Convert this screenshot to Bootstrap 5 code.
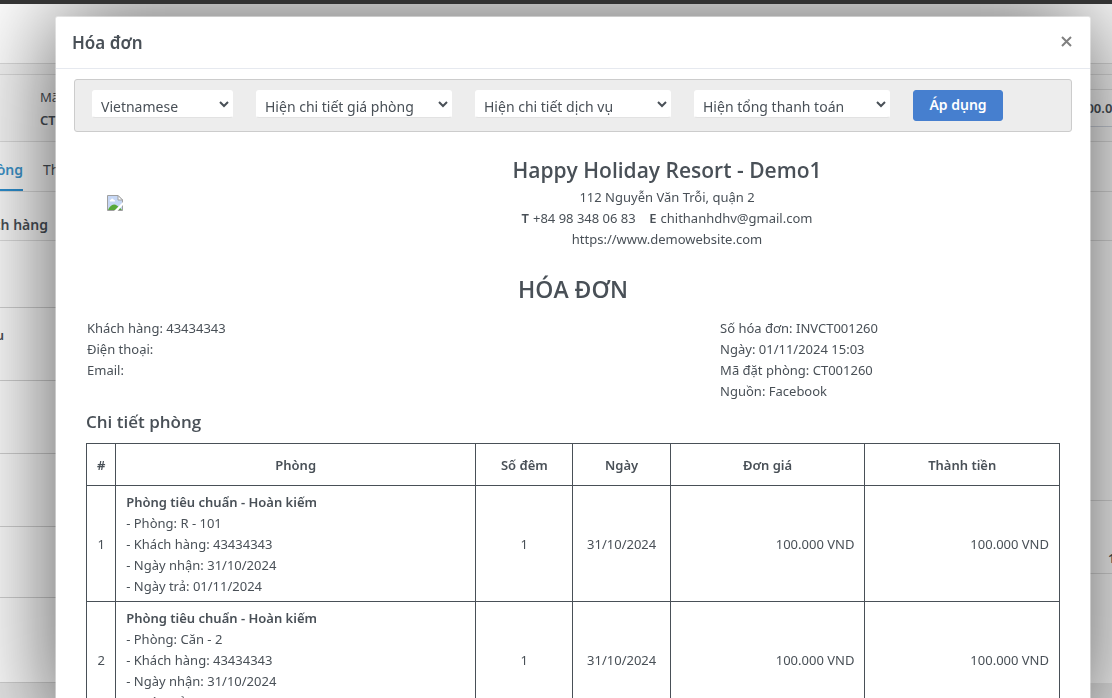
<!DOCTYPE html>
<html lang="vi">
<head>
<meta charset="utf-8">
<meta name="viewport" content="width=device-width, initial-scale=1">
<title>Hóa đơn</title>
<link href="https://cdn.jsdelivr.net/npm/bootstrap@5.3.0/dist/css/bootstrap.min.css" rel="stylesheet">
<style>
:root { --ink: #495057; --edge: #dcdcdc; }
html, body { height: 100%; overflow: hidden; }
body { font-family: "Noto Sans", "Open Sans", sans-serif; font-size: 13px; line-height: 21px; color: var(--ink); background: #fafafa; }
a { color: inherit; text-decoration: none; }

/* booking page behind the dialog */
.page-top { height: 4px; background: #333; z-index: 1060; }
.band { border-bottom: 1px solid var(--edge); }
.band-head { height: 60px; background: #fff; }
.band-gap { height: 11px; background: #f5f5f5; }
.band-summary { height: 67px; background: #f7f7f7; padding-left: 40px; }
.code-box { padding-top: 11px; line-height: 23px; }
.amount-box { width: 70px; height: 38px; margin-top: 14px; padding-top: 8px; padding-left: 36px; border: 1px solid var(--edge); border-right: 0; border-bottom-color: #cdd2dc; background: #f9f9f9; font-weight: 600; white-space: nowrap; }
.band-tabs { height: 50px; background: #fafafa; gap: 20px; }
.tab-item { width: 40px; padding-top: 17px; white-space: nowrap; font-size: 14px; }
.tab-on { width: 23px; color: #3c94ca; font-weight: 600; border-bottom: 2px solid #2d8fcf; justify-content: flex-end; }
.band-names { height: 48px; width: 48px; padding-top: 22px; justify-content: flex-end; white-space: nowrap; font-weight: 600; font-size: 14px; }
.list-left .band { height: 73px; border-color: #d0d0d0; }
.list-left .band:first-child { height: 67px; }
.list-left .band:nth-child(5) { height: 71px; }
.list-left .band:last-child { height: 85px; }
.list-right .band { height: 73px; }
.list-right .band:first-child { height: 260px; }
.sliver { width: 4px; justify-content: flex-end; padding-top: 17px; white-space: nowrap; }
.page-body { height: 442px; background: #fcfcfc; }
.page-foot { background: #e6e6e6; }

/* invoice dialog */
.modal { --bs-modal-width: 100%; overflow: hidden; }
.modal-dialog { max-width: none; margin: 16px 21px 0 55px; }
.modal-content { border: 1px solid rgba(255, 255, 255, .4); background-clip: padding-box; border-radius: 3px; box-shadow: 0 0 100px rgba(0, 0, 0, .68); color: var(--ink); }
.modal-header { height: 52px; padding: 0 16px; border-color: #e6e9ef; border-radius: 0; }
.modal-title { font-size: 17px; font-weight: 600; line-height: 24px; }
.close-x { border: 0; background: none; padding: 0 0 2px; width: 16px; height: 16px; display: flex; align-items: center; justify-content: center; }
.modal-body { padding: 10px 18px; }
.filters { height: 53px; padding: 10px 17px; gap: 23px; background: #ededed; border: 1px solid #ccc; border-radius: 3px; }
.filters select { appearance: auto; width: 196px; height: 28px; padding: 4px 0 0 4px; border: 1px solid #fff; border-bottom-color: #e2e2e2; border-radius: 3px; background: #fff; color: var(--ink); font-size: 14px; line-height: 21px; }
.filters .pick-lang { width: 141px; }
.btn-apply { --bs-btn-bg: #467fcf; --bs-btn-border-color: #467fcf; --bs-btn-hover-bg: #316cbe; --bs-btn-color: #fff; width: 90px; height: 31px; padding: 0 0 2px; border-radius: 3px; font-size: 14px; font-weight: 600; }
.invoice { padding: 24px 12px 0; }
.logo-cell { width: 188px; padding: 39px 21px 0; }
.resort { font-family: "Open Sans", sans-serif; font-size: 21px; font-weight: 600; line-height: 28px; margin: 0 0 3px; }
.doc-title { font-family: "Open Sans", sans-serif; font-size: 23px; font-weight: 600; line-height: 30px; margin: 24px 0 14px; }
.info-left { width: 65%; padding-left: 1px; }
.info-right { width: 35%; padding-left: 1px; }
.part-title { font-family: "Open Sans", sans-serif; font-size: 17px; font-weight: 600; line-height: 24px; margin: 8px 0 9px; }
.rooms { table-layout: fixed; width: 100%; margin: 0; }
.rooms th, .rooms td { border: 1px solid var(--ink); padding: 6px 10px 4px; vertical-align: middle; text-align: center; }
.rooms th { padding: 11px 4px 9px; font-weight: 600; }
.rooms td.room { text-align: left; white-space: nowrap; }
.rooms td.money { text-align: right; }
.rooms td.idx, .rooms td.day { padding-left: 0; padding-right: 0; }
b { font-weight: 600; }
</style>
</head>
<body>
<div class="page-top position-relative"></div>
<div class="band band-head"></div>
<div class="band band-gap"></div>
<div class="band band-summary d-flex justify-content-between">
  <div class="code-box">Mã đặt phòng<br><b>CT001260</b></div>
  <div class="amount-box">100.000</div>
</div>
<div class="band band-tabs d-flex">
  <a href="#" class="tab-item tab-on d-flex">Phòng</a>
  <a href="#" class="tab-item">Thanh toán</a>
</div>
<div class="band"><div class="band-names d-flex">Khách hàng</div></div>
<div class="page-body d-flex">
  <div class="list-left w-50">
    <div class="band"></div>
    <div class="band"><b class="sliver d-flex">Lưu</b></div>
    <div class="band"></div>
    <div class="band"></div>
    <div class="band"></div>
    <div class="band"></div>
  </div>
  <div class="list-right w-50">
    <div class="band"></div>
    <div class="band d-flex justify-content-end align-items-end pb-1"><b class="sliver d-flex justify-content-start">1</b></div>
  </div>
</div>
<div class="page-foot h-100"></div>

<div class="modal d-block" tabindex="-1" role="dialog" aria-labelledby="dialogTitle">
  <div class="modal-dialog">
    <div class="modal-content">
      <div class="modal-header">
        <h5 class="modal-title" id="dialogTitle">Hóa đơn</h5>
        <button type="button" class="close-x" aria-label="Đóng">
          <svg width="11" height="11" viewBox="0 0 11 11"><path d="M1 1 10 10M10 1 1 10" stroke="#808080" stroke-width="2" fill="none"/></svg>
        </button>
      </div>
      <div class="modal-body">
        <form class="filters d-flex align-items-start">
          <select class="pick-lang" aria-label="Ngôn ngữ"><option>Vietnamese</option></select>
          <select aria-label="Giá phòng"><option>Hiện chi tiết giá phòng</option></select>
          <select aria-label="Dịch vụ"><option>Hiện chi tiết dịch vụ</option></select>
          <select aria-label="Thanh toán"><option>Hiện tổng thanh toán</option></select>
          <button type="button" class="btn btn-apply">Áp dụng</button>
        </form>
        <div class="invoice">
          <div class="d-flex">
            <div class="logo-cell">
              <svg class="d-block" width="16" height="16" viewBox="0 0 16 16" role="img" aria-label="Logo">
                <path d="M.5.5H11L15.500 5V15.500H.5Z" fill="#c6d7f5" stroke="#a0a0a0"/>
                <path d="M11 .5V5H15.500Z" fill="#fff" stroke="#a0a0a0"/>
                <path d="M3 6.500Q2 5 4 4.500Q5 2.500 6.500 4.500Q8.500 5 8 6.500Z" fill="#fff"/>
                <path d="M1 15Q3 10 7 9.500Q10 9.500 15 15Z" fill="#58a83a"/>
                <path d="M7 16 16 7V10L10.500 16Z" fill="#fff"/>
              </svg>
            </div>
            <div class="flex-grow-1 text-center">
              <h2 class="resort">Happy Holiday Resort - Demo1</h2>
              <div>112 Nguyễn Văn Trỗi, quận 2</div>
              <div><b class="me-1">T</b>+84 98 348 06 83 &nbsp;&nbsp; <b class="me-1">E</b>chithanhdhv@gmail.com</div>
              <div>https://www.demowebsite.com</div>
            </div>
          </div>
          <h1 class="doc-title text-center">HÓA ĐƠN</h1>
          <div class="d-flex">
            <div class="info-left">
              <div>Khách hàng: 43434343</div>
              <div>Điện thoại:</div>
              <div>Email:</div>
            </div>
            <div class="info-right">
              <div>Số hóa đơn: INVCT001260</div>
              <div>Ngày: 01/11/2024 15:03</div>
              <div>Mã đặt phòng: CT001260</div>
              <div>Nguồn: Facebook</div>
            </div>
          </div>
          <h4 class="part-title">Chi tiết phòng</h4>
          <table class="rooms">
            <colgroup><col style="width:3%"><col style="width:37%"><col style="width:10%"><col style="width:10%"><col style="width:20%"><col style="width:20%"></colgroup>
            <thead>
              <tr><th>#</th><th>Phòng</th><th>Số đêm</th><th>Ngày</th><th>Đơn giá</th><th>Thành tiền</th></tr>
            </thead>
            <tbody>
              <tr>
                <td class="idx">1</td>
                <td class="room"><b>Phòng tiêu chuẩn - Hoàn kiếm</b><br>- Phòng: R - 101<br>- Khách hàng: 43434343<br>- Ngày nhận: 31/10/2024<br>- Ngày trả: 01/11/2024</td>
                <td>1</td><td class="day">31/10/2024</td><td class="money">100.000 VND</td><td class="money">100.000 VND</td>
              </tr>
              <tr>
                <td class="idx">2</td>
                <td class="room"><b>Phòng tiêu chuẩn - Hoàn kiếm</b><br>- Phòng: Căn - 2<br>- Khách hàng: 43434343<br>- Ngày nhận: 31/10/2024<br>- Ngày trả: 01/11/2024</td>
                <td>1</td><td class="day">31/10/2024</td><td class="money">100.000 VND</td><td class="money">100.000 VND</td>
              </tr>
            </tbody>
          </table>
        </div>
      </div>
    </div>
  </div>
</div>
<script src="https://cdn.jsdelivr.net/npm/bootstrap@5.3.0/dist/js/bootstrap.bundle.min.js"></script>
</body>
</html>
